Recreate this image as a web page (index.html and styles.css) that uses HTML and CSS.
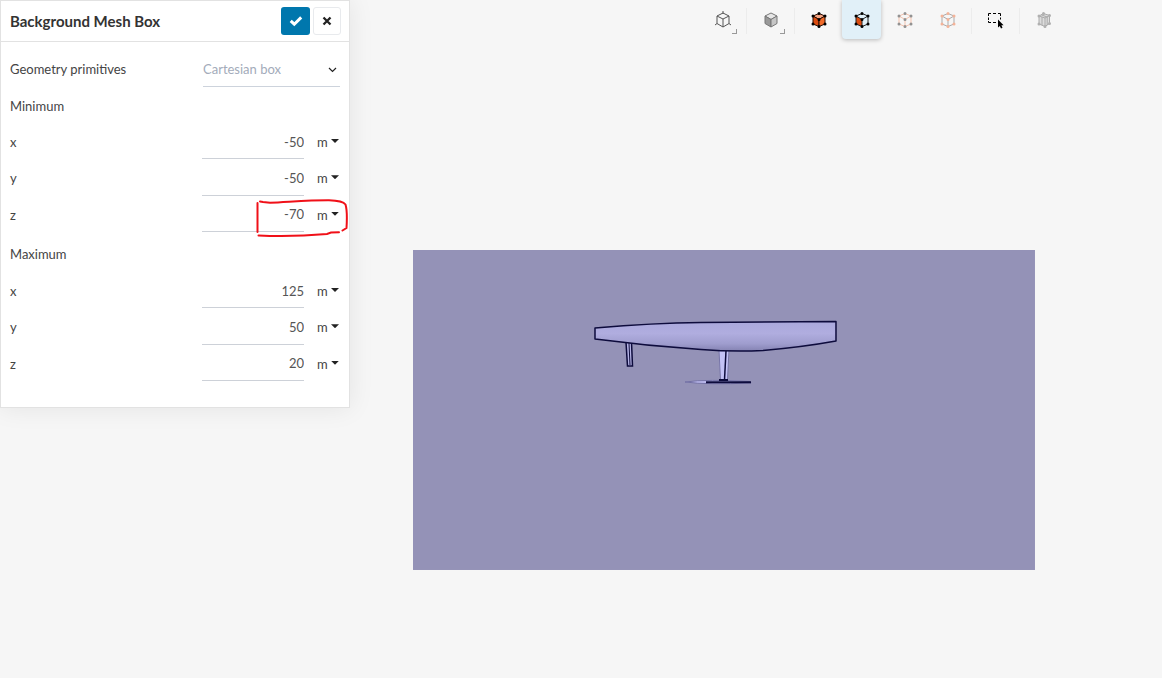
FILE: index.html
```html
<!doctype html>
<html lang="en">
<head>
    <meta charset="utf-8">
    <meta name="viewport" content="width=device-width, initial-scale=1.0">
    <title>Background Mesh Box</title>
    <link rel="stylesheet" href="styles.css">
</head>
<body>
    <form class="panel">
        <header class="panel-header">
            <h1>Background Mesh Box</h1>
            <button type="button" class="btn btn-apply" aria-label="Apply">
                <svg width="14" height="12" viewBox="0 0 14 12"><path d="M1.7 5.8 5.3 9.2 12.2 2.4" fill="none" stroke="#fff" stroke-width="3"/></svg>
            </button>
            <button type="button" class="btn btn-close" aria-label="Close">
                <svg width="10" height="10" viewBox="0 0 10 10"><path d="M1.5 1.5 8.5 8.5M8.5 1.5 1.5 8.5" stroke="#222" stroke-width="2.3"/></svg>
            </button>
        </header>

        <div class="panel-body">
            <div class="row row-select">
                <label for="primitive">Geometry primitives</label>
                <div class="primitive">
                    <select id="primitive"><option>Cartesian box</option></select>
                    <svg class="chevron" width="9" height="6" viewBox="0 0 9 6"><path d="M1 1 4.5 4.5 8 1" fill="none" stroke="#222" stroke-width="1.2"/></svg>
                </div>
            </div>

            <h2>Minimum</h2>
            <div class="axes">
                <div class="row">
                    <label for="min-x">x</label>
                    <input id="min-x" type="text" value="-50">
                    <div class="unit"><select aria-label="Minimum x unit"><option>m</option></select></div>
                </div>
                <div class="row">
                    <label for="min-y">y</label>
                    <input id="min-y" type="text" value="-50">
                    <div class="unit"><select aria-label="Minimum y unit"><option>m</option></select></div>
                </div>
                <div class="row">
                    <label for="min-z">z</label>
                    <input id="min-z" type="text" value="-70">
                    <div class="unit"><select aria-label="Minimum z unit"><option>m</option></select></div>
                    <svg class="marker" width="94" height="40" viewBox="0 0 94 40">
                        <path d="M3.5 5V34M6 3.500 9 4 16 4.800C35 4 55 2.200 75 2.300C82 2.500 89 3 91.500 6.500C93.500 13 93 22 92.500 30L88.500 32.500M4.500 37.500C25 38.500 50 38 73 36L77 34.500 85 34.300"/>
                    </svg>
                </div>
            </div>

            <h2 class="spaced">Maximum</h2>
            <div class="axes">
                <div class="row">
                    <label for="max-x">x</label>
                    <input id="max-x" type="text" value="125">
                    <div class="unit"><select aria-label="Maximum x unit"><option>m</option></select></div>
                </div>
                <div class="row">
                    <label for="max-y">y</label>
                    <input id="max-y" type="text" value="50">
                    <div class="unit"><select aria-label="Maximum y unit"><option>m</option></select></div>
                </div>
                <div class="row">
                    <label for="max-z">z</label>
                    <input id="max-z" type="text" value="20">
                    <div class="unit"><select aria-label="Maximum z unit"><option>m</option></select></div>
                </div>
            </div>
        </div>
    </form>

    <main class="viewer">
        <!-- view and selection tools -->
        <nav class="toolbar">
            <button type="button" class="tool has-menu" aria-label="View orientation">
                <svg width="20" height="20" viewBox="0 0 20 20" fill="none" stroke="#555">
                    <path d="M10 3 16 6V13.500L10 17 4 13.500V6ZM4 6 10 9 16 6M10 9V17"/>
                    <path d="M10 1V4M4 13.500 2 15M16 13.500 18 15"/>
                </svg>
            </button>
            <i class="sep"></i>
            <button type="button" class="tool has-menu" aria-label="Render mode">
                <svg width="20" height="20" viewBox="0 0 20 20" stroke="#777" stroke-linejoin="round">
                    <path d="M10 3 16 6 10 9.500 4 6Z" fill="#e6e6e6"/>
                    <path d="M4 6 10 9.500V17L4 13.500Z" fill="#999"/>
                    <path d="M16 6 10 9.500V17L16 13.500Z" fill="#c6c6c6"/>
                </svg>
            </button>
            <i class="sep"></i>
            <button type="button" class="tool" aria-label="Select volumes">
                <svg width="20" height="20" viewBox="0 0 20 20" stroke="#2a0d00">
                    <path d="M10 3.500 16 6 10 9.500 4 6Z" fill="#f5a584"/>
                    <path d="M4 6 10 9.500V16.500L4 14Z" fill="#dc4c10"/>
                    <path d="M16 6 10 9.500V16.500L16 14Z" fill="#f06a2a"/>
                    <path class="dots" stroke="#000" d="M10 3.500h0M16 6h0M16 14h0M10 16.500h0M4 14h0M4 6h0M10 9.500h0"/>
                </svg>
            </button>
            <button type="button" class="tool active" aria-label="Select faces">
                <svg width="20" height="20" viewBox="0 0 20 20" fill="none" stroke="#222">
                    <path d="M4 6 10 9.500V16.500L4 14Z" fill="#dc4c10"/>
                    <path d="M10 3.500 16 6V14L10 16.500M4 6 10 3.500M10 9.500 16 6"/>
                    <path class="dots" stroke="#000" d="M10 3.500h0M16 6h0M16 14h0M10 16.500h0M4 14h0M4 6h0M10 9.500h0"/>
                </svg>
            </button>
            <button type="button" class="tool" aria-label="Select edges">
                <svg width="20" height="20" viewBox="0 0 20 20" fill="none" stroke="#f5c3ae">
                    <path d="M10 3.500 16 6V14L10 16.500 4 14V6ZM4 6 10 9.500 16 6M10 9.500V16.500"/>
                    <path class="dots" stroke="#929292" d="M10 3.500h0M16 6h0M16 14h0M10 16.500h0M4 14h0M4 6h0M10 9.500h0"/>
                </svg>
            </button>
            <button type="button" class="tool" aria-label="Select vertices">
                <svg width="20" height="20" viewBox="0 0 20 20" fill="none" stroke="#aaa">
                    <path d="M10 3.500 16 6V14L10 16.500 4 14V6ZM4 6 10 9.500 16 6M10 9.500V16.500"/>
                    <path class="dots" stroke="#f4b398" d="M10 3.500h0M16 6h0M16 14h0M10 16.500h0M4 14h0M4 6h0M10 9.500h0"/>
                </svg>
            </button>
            <i class="sep"></i>
            <button type="button" class="tool" aria-label="Box select">
                <svg width="20" height="20" viewBox="0 0 20 20" fill="none">
                    <path d="M2.500 6V3.500H5M7 3.500h3M12 3.500h2.500V6M2.500 7.500v2.500M14.500 7.500v2M2.500 11v1.500H5M7 12.500h3" stroke="#000"/>
                    <path d="M12 9.500V17.500L13.800 16 15 18.500 16.500 17.800 15.400 15.300H17.600Z" fill="#000"/>
                </svg>
            </button>
            <i class="sep"></i>
            <button type="button" class="tool" aria-label="Hide selection">
                <svg width="20" height="20" viewBox="0 0 20 20" fill="#ddd" stroke="#aaa">
                    <path d="M5 6 9.500 3.500 15.500 5.500V13.500L11 16.500 5 14Z"/>
                    <path d="M5 6 11 8V16.500M11 8 15.500 5.500M8 7V15M13.200 7V15M7.200 4.800 13.200 7"/>
                    <path class="dots" stroke="#b0b0b0" d="M9.500 3.500h0M15.500 5.500h0M15.500 13.500h0M11 16.500h0M5 14h0M5 6h0"/>
                </svg>
            </button>
        </nav>

        <svg class="mesh" viewBox="0 0 622 320" role="img" aria-label="Hull inside the background mesh box">
            <defs>
                <linearGradient id="hull" x1="0" y1="0" x2="0" y2="1">
                    <stop offset="0" stop-color="#aaa8dc"/>
                    <stop offset=".4" stop-color="#b0addf"/>
                    <stop offset=".75" stop-color="#9f9dce"/>
                    <stop offset="1" stop-color="#8482b2"/>
                </linearGradient>
            </defs>
            <rect width="622" height="320" fill="#9492b7"/>
            <!-- rudder -->
            <path d="M213 92 214.500 116H219.500L218.500 92Z" fill="#b4b2e4" stroke="#0d0b3c" stroke-width="1.5"/>
            <path d="M216 93 217 115" stroke="#0d0b3c"/>
            <!-- keel and bulb -->
            <path d="M306 100 307.500 130H314.500L316 100Z" fill="#c3c1f6" stroke="#7775a8"/>
            <path d="M313 101 311.500 130" stroke="#0d0b3c" stroke-width="1.500"/>
            <path d="M272 132 Q294 129 337 131.500 L338 133 Q295 135 272 132Z" fill="#bebcf0" stroke="#7270a4"/>
            <path d="M293 132.200H338M306 130H315" stroke="#0d0b3c" stroke-width="2"/>
            <!-- hull -->
            <path d="M182 78 Q240 73 288 72.500 L423 71.500V91 Q390 97 350 100.500 Q320 102 288 99.500 Q235 96 182 89Z" fill="url(#hull)" stroke="#0d0b3c" stroke-width="1.500" stroke-linejoin="round"/>
        </svg>
    </main>
</body>
</html>
```

FILE: styles.css
```css
* {
    box-sizing: border-box;
}

body {
    margin: 0;
    min-height: 100vh;
    display: flex;
    align-items: flex-start;
    background: #f6f6f6;
    color: #444;
    font: 13px/20px Lato, "Open Sans", sans-serif;
}

h1, h2 {
    margin: 0;
}

button, input, select {
    font: inherit;
    color: inherit;
    margin: 0;
    padding: 0;
    border: 0;
    border-radius: 0;
    background: none;
    outline: none;
}

select {
    appearance: none;
}

/* settings panel */
.panel {
    flex: 0 0 350px;
    background: #fff;
    border: 1px solid #e2e2e2;
    box-shadow: 0 0 24px rgba(0, 0, 0, .08);
}

.panel-header {
    display: flex;
    align-items: center;
    gap: 3px;
    height: 41px;
    padding: 0 8px 0 9px;
    border-bottom: 1px solid #e2e2e2;
}

.panel-header h1 {
    flex: 1;
    font-size: 15px;
    font-weight: bold;
    color: #333;
}

.btn {
    display: flex;
    align-items: center;
    justify-content: center;
    width: 28px;
    height: 28px;
    border-radius: 3px;
}

.btn-apply {
    width: 29px;
    background: #0077ad;
}

.btn-close {
    border: 1px solid #e8eaed;
}

.panel-body {
    padding: 9px 9px 26px;
}

.row {
    position: relative;
    display: flex;
    align-items: stretch;
}

.row label {
    flex: 1;
    align-self: center;
}

.axes label,
.axes input,
.unit select {
    padding-top: 2px;
}

.row input {
    width: 102px;
    text-align: right;
    color: #555;
    border-bottom: 1px solid #cdd1d8;
}

.row-select {
    height: 36px;
}

.primitive {
    position: relative;
    width: 137px;
}

.primitive select {
    width: 100%;
    height: 100%;
    color: #a3abba;
    border-bottom: 1px solid #cdd3dc;
}

.chevron {
    position: absolute;
    right: 3px;
    top: 16px;
    pointer-events: none;
}

h2 {
    height: 36px;
    padding-top: 9px;
    font-size: 13px;
    line-height: 20px;
    font-weight: normal;
}

h2.spaced {
    height: 40px;
    padding-top: 12px;
}

.axes {
    display: grid;
    grid-template-rows: repeat(3, 1fr);
    height: 109px;
}

.unit {
    position: relative;
    width: 23px;
    margin-left: 13px;
}

.unit select {
    width: 100%;
    height: 100%;
}

.unit::after {
    content: "";
    position: absolute;
    right: 1px;
    top: 16px;
    width: 8px;
    height: 4px;
    background: #222;
    clip-path: polygon(0 0, 100% 0, 50% 100%);
    pointer-events: none;
}

/* hand-drawn mark round a value */
.marker {
    position: absolute;
    right: -8px;
    top: 2px;
    fill: none;
    stroke: #f01018;
    stroke-width: 2;
    stroke-linecap: round;
    pointer-events: none;
}

/* 3d viewer */
.viewer {
    flex: 1;
    display: flex;
    flex-direction: column;
    align-items: flex-end;
}

.toolbar {
    display: flex;
    gap: 4px;
    padding-right: 99px;
}

.tool {
    position: relative;
    display: flex;
    align-items: center;
    justify-content: center;
    width: 39px;
    height: 39px;
    border-radius: 0 0 4px 4px;
}

.tool.active {
    background: #e1f0f8;
    box-shadow: 0 1px 4px rgba(0, 0, 0, .25);
}

.has-menu::after {
    content: "";
    position: absolute;
    right: 5px;
    bottom: 5px;
    width: 4px;
    height: 4px;
    border: solid #999;
    border-width: 0 1px 1px 0;
}

.dots {
    stroke-width: 3;
    stroke-linecap: round;
}

.sep {
    width: 1px;
    height: 26px;
    margin-top: 8px;
    background: #ececec;
}

.mesh {
    width: 76.6%;
    margin: 211px 127px 0 0;
}
```
